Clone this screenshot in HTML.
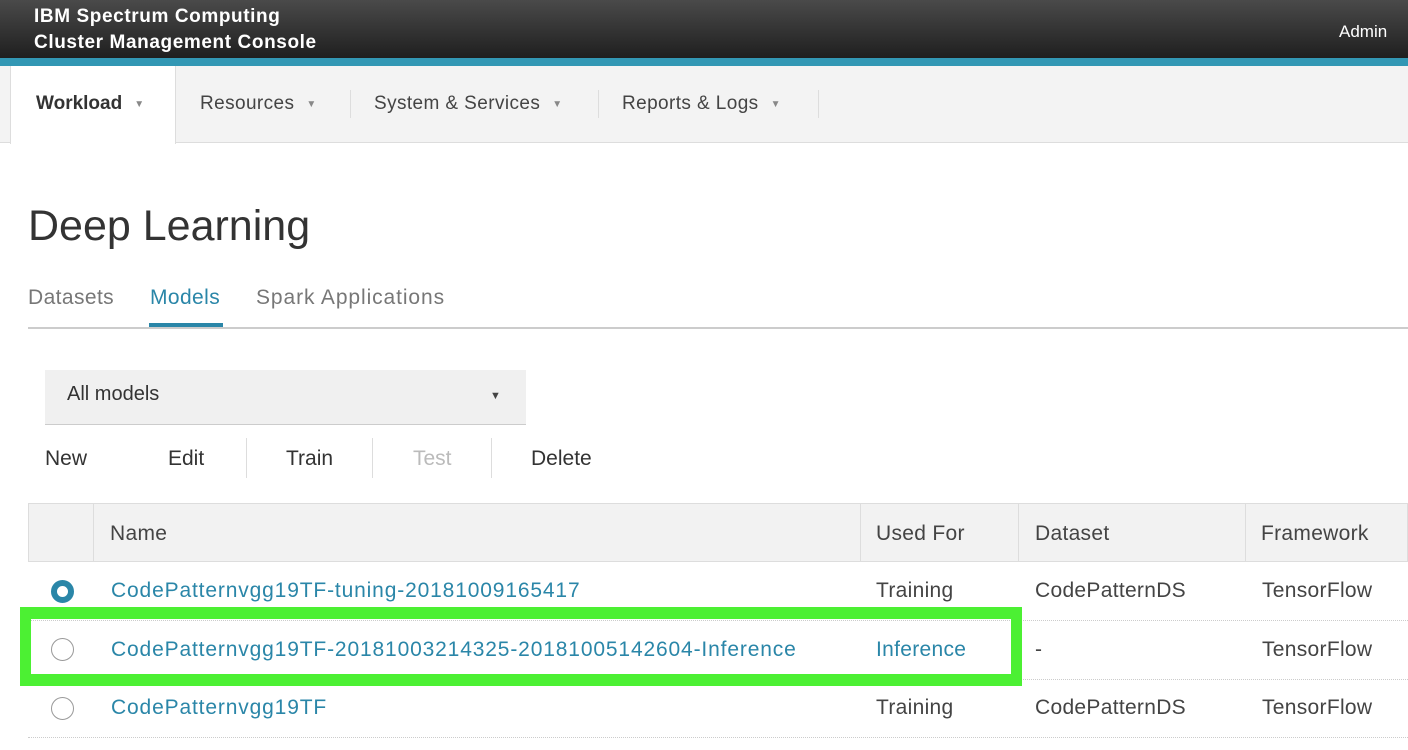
<!DOCTYPE html>
<html><head><meta charset="utf-8"><style>
*{margin:0;padding:0;box-sizing:border-box}
body{width:1408px;height:750px;overflow:hidden;background:#fff;font-family:"Liberation Sans",sans-serif;position:relative;color:#333}
.abs{position:absolute;white-space:nowrap}
#hdr{position:absolute;left:0;top:0;width:1408px;height:58px;background:linear-gradient(#4a4a4a,#1f1f1f)}
#blue{position:absolute;left:0;top:58px;width:1408px;height:8px;background:#3297b4}
#nav{position:absolute;left:0;top:66px;width:1408px;height:77px;background:#f3f3f3;border-bottom:1px solid #ddd}
.navt{position:absolute;top:93px;font-size:19px;color:#444;letter-spacing:0.4px;white-space:nowrap}
.caret{font-size:10px;color:#888;margin-left:12px;vertical-align:2px}
.sep{position:absolute;top:90px;width:1px;height:28px;background:#ddd}
.tb{position:absolute;top:447px;font-size:21px;color:#333}
.tsep{position:absolute;top:438px;width:1px;height:40px;background:#ddd}
.th{position:absolute;top:522px;font-size:21px;color:#444;letter-spacing:0.3px}
.vl{position:absolute;top:503px;width:1px;height:59px;background:#ddd}
.cell{position:absolute;font-size:21px;color:#444;white-space:nowrap;letter-spacing:0.3px}
.lnk{color:#2a86a8;letter-spacing:0.85px}
.hl{position:absolute;left:28px;width:1380px;height:1px;border-top:1px dotted #ccc}
.rad{position:absolute;left:51px;width:23px;height:23px;border-radius:50%;border:1.5px solid #999;background:#fff}
</style></head><body>
<div id="hdr"></div>
<div class="abs" style="left:34px;top:4px;color:#fff;font-weight:bold;font-size:19px;letter-spacing:0.6px;line-height:26px">IBM Spectrum Computing<br>Cluster Management Console</div>
<div class="abs" style="left:1339px;top:22px;color:#fff;font-size:17px">Admin</div>
<div id="blue"></div>
<div id="nav"></div>
<div style="position:absolute;left:10px;top:66px;width:166px;height:78px;background:#fff;border-left:1px solid #ddd;border-right:1px solid #ddd"></div>
<div class="navt" style="left:36px;font-weight:bold;color:#333;letter-spacing:0">Workload<span class="caret">▼</span></div>
<div class="navt" style="left:200px">Resources<span class="caret">▼</span></div>
<div class="sep" style="left:350px"></div>
<div class="navt" style="left:374px">System &amp; Services<span class="caret">▼</span></div>
<div class="sep" style="left:598px"></div>
<div class="navt" style="left:622px">Reports &amp; Logs<span class="caret">▼</span></div>
<div class="sep" style="left:818px"></div>
<div class="abs" style="left:28px;top:202px;font-size:43px;color:#333">Deep Learning</div>
<div class="abs" style="left:28px;top:286px;font-size:21px;color:#777;letter-spacing:0.4px">Datasets</div>
<div class="abs" style="left:150px;top:286px;font-size:21px;color:#2a86a8;letter-spacing:0.4px">Models</div>
<div class="abs" style="left:256px;top:286px;font-size:21px;color:#777;letter-spacing:0.9px">Spark Applications</div>
<div style="position:absolute;left:28px;top:327px;width:1380px;height:2px;background:#ccc"></div>
<div style="position:absolute;left:149px;top:323px;width:74px;height:4px;background:#2a86a8"></div>
<div style="position:absolute;left:45px;top:370px;width:481px;height:55px;background:#f0f0f0;border-bottom:1px solid #ccc"></div>
<div class="abs" style="left:67px;top:383px;font-size:20px;color:#333">All models</div>
<div class="abs" style="left:490px;top:390px;font-size:11px;color:#444">▼</div>
<div class="tb" style="left:45px">New</div>
<div class="tb" style="left:168px">Edit</div>
<div class="tsep" style="left:246px"></div>
<div class="tb" style="left:286px">Train</div>
<div class="tsep" style="left:372px"></div>
<div class="tb" style="left:413px;color:#bbb">Test</div>
<div class="tsep" style="left:491px"></div>
<div class="tb" style="left:531px">Delete</div>
<div style="position:absolute;left:28px;top:503px;width:1380px;height:59px;background:#f2f2f2;border:1px solid #ddd"></div>
<div class="vl" style="left:93px"></div><div class="vl" style="left:860px"></div><div class="vl" style="left:1018px"></div><div class="vl" style="left:1245px"></div>
<div class="th" style="left:110px">Name</div>
<div class="th" style="left:876px">Used For</div>
<div class="th" style="left:1035px">Dataset</div>
<div class="th" style="left:1261px">Framework</div>
<div class="rad" style="top:580px;border:6px solid #2a86a8;background:#fff"></div>
<div class="cell lnk" style="left:111px;top:579px">CodePatternvgg19TF-tuning-20181009165417</div>
<div class="cell" style="left:876px;top:579px">Training</div>
<div class="cell" style="left:1035px;top:579px">CodePatternDS</div>
<div class="cell" style="left:1262px;top:579px">TensorFlow</div>
<div class="hl" style="top:620px"></div>
<div class="rad" style="top:638px"></div>
<div class="cell lnk" style="left:111px;top:638px">CodePatternvgg19TF-20181003214325-20181005142604-Inference</div>
<div class="cell lnk" style="left:876px;top:638px;letter-spacing:0.3px">Inference</div>
<div class="cell" style="left:1035px;top:638px">-</div>
<div class="cell" style="left:1262px;top:638px">TensorFlow</div>
<div class="hl" style="top:679px"></div>
<div class="rad" style="top:697px"></div>
<div class="cell lnk" style="left:111px;top:696px">CodePatternvgg19TF</div>
<div class="cell" style="left:876px;top:696px">Training</div>
<div class="cell" style="left:1035px;top:696px">CodePatternDS</div>
<div class="cell" style="left:1262px;top:696px">TensorFlow</div>
<div class="hl" style="top:737px"></div>
<div style="position:absolute;left:20px;top:607px;width:1002px;height:79px;border:12px solid #4cf033;border-left-width:11px;border-right-width:11px"></div>
</body></html>
